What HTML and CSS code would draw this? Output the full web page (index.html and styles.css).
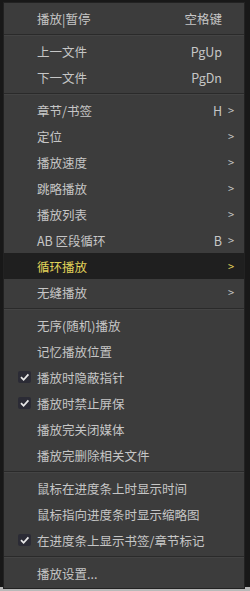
FILE: index.html
```html
<!DOCTYPE html>
<html lang="zh-CN">
<head>
  <meta charset="utf-8">
  <title>播放菜单</title>
  <link rel="stylesheet" href="styles.css">
</head>
<body>
  <div class="menu">

    <div class="item"><span class="label">播放|暂停</span><span class="key">空格键</span><span class="arrow"></span></div>
    <div class="sep"></div>

    <div class="item"><span class="label">上一文件</span><span class="key">PgUp</span><span class="arrow"></span></div>
    <div class="item"><span class="label">下一文件</span><span class="key">PgDn</span><span class="arrow"></span></div>
    <div class="sep"></div>

    <div class="item"><span class="label">章节/书签</span><span class="key">H</span><span class="arrow">&gt;</span></div>
    <div class="item"><span class="label">定位</span><span class="key"></span><span class="arrow">&gt;</span></div>
    <div class="item"><span class="label">播放速度</span><span class="key"></span><span class="arrow">&gt;</span></div>
    <div class="item"><span class="label">跳略播放</span><span class="key"></span><span class="arrow">&gt;</span></div>
    <div class="item"><span class="label">播放列表</span><span class="key"></span><span class="arrow">&gt;</span></div>
    <div class="item"><span class="label">AB 区段循环</span><span class="key">B</span><span class="arrow">&gt;</span></div>
    <div class="item active"><span class="label">循环播放</span><span class="key"></span><span class="arrow">&gt;</span></div>
    <div class="item"><span class="label">无缝播放</span><span class="key"></span><span class="arrow">&gt;</span></div>
    <div class="sep"></div>

    <div class="item"><span class="label">无序(随机)播放</span></div>
    <div class="item"><span class="label">记忆播放位置</span></div>
    <div class="item checked"><span class="label">播放时隐蔽指针</span></div>
    <div class="item checked"><span class="label">播放时禁止屏保</span></div>
    <div class="item"><span class="label">播放完关闭媒体</span></div>
    <div class="item"><span class="label">播放完删除相关文件</span></div>
    <div class="sep"></div>

    <div class="item"><span class="label">鼠标在进度条上时显示时间</span></div>
    <div class="item"><span class="label">鼠标指向进度条时显示缩略图</span></div>
    <div class="item checked"><span class="label">在进度条上显示书签/章节标记</span></div>
    <div class="sep"></div>

    <div class="item"><span class="label">播放设置...</span></div>

  </div>
</body>
</html>
```

FILE: styles.css
```css
:root {
  --bg: #3c3c3c;
  --text: #c6c6c6;
  --hover: #1f1f1f;
  --hover-text: #e2d35a;
  --line: #2a2a2a;
  --font: "Noto Sans CJK SC", "Noto Sans", sans-serif;
}

body {
  margin: 0;
  height: 591px;
  background: linear-gradient(to bottom, #181818 0, #181818 587px, #b9b9b9 587px);
  font: 12.5px var(--font);
  color: var(--text);
  overflow: hidden;
}

.menu {
  box-sizing: border-box;
  width: 242px;
  margin: 2px 0 0 3px;
  padding: 2px 0;
  background-color: var(--bg);
  border: 1px solid #222;
}

.item {
  position: relative;
  display: flex;
  align-items: center;
  height: 26px;
  padding: 0 10px 0 33px;
}

.label {flex: 1; white-space: nowrap}

.key {text-align: right}

.arrow {
  width: 12px;
  text-align: right;
  font-size: 11px;
}

.active {
  background-color: var(--hover);
  color: var(--hover-text);
}

.checked::before {
  content: "";
  position: absolute;
  left: 14px;
  top: 7px;
  width: 13px;
  height: 12px;
  background: #2b2b35 url("data:image/svg+xml,%3Csvg xmlns='http://www.w3.org/2000/svg' width='13' height='12'%3E%3Cpath d='M3 6.2l2.6 2.6L10.4 3.4' fill='none' stroke='%23e8e8e8' stroke-width='1.8'/%3E%3C/svg%3E") no-repeat center;
  border-radius: 2px;
}

.sep {
  height: 1px;
  margin: 3px 0;
  background-color: var(--line);
  box-shadow: 0 1px 0 #444;
}
```
